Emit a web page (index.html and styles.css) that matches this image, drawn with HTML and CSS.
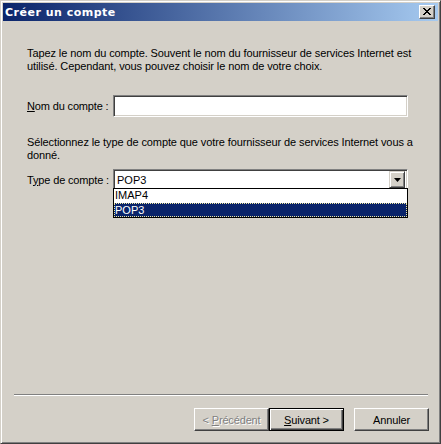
FILE: index.html
```html
<!DOCTYPE html>
<html lang="fr">
<head>
<meta charset="utf-8">
<title>Créer un compte</title>
<link rel="stylesheet" href="styles.css">
</head>
<body>
<div class="window">
  <div class="titlebar">
    <span class="title">Créer un compte</span>
    <button class="close" aria-label="Fermer">
      <svg width="8" height="7" viewBox="0 0 8 7"><path d="M0 0h2v1h1v1h2V1h1V0h2v1H7v1H6v1H5v1h1v1h1v1h1v1H6V6H5V5H3v1H2v1H0V6h1V5h1V4h1V3H2V2H1V1H0z" fill="#000"/></svg>
    </button>
  </div>
  <div class="content">
    <p class="para first">Tapez le nom du compte. Souvent le nom du fournisseur de services Internet est utilisé. Cependant, vous pouvez choisir le nom de votre choix.</p>
    <div class="row name-row">
      <label class="label"><u>N</u>om du compte :</label>
      <div class="edit"></div>
    </div>
    <p class="para second">Sélectionnez le type de compte que votre fournisseur de services Internet vous a donné.</p>
    <div class="row type-row">
      <label class="label">T<u>y</u>pe de compte :</label>
      <div class="combo">
        <span class="combo-value">POP3</span>
        <span class="combo-btn">
          <svg width="7" height="4" viewBox="0 0 7 4"><path d="M0 0h7L3.5 4z" fill="#000"/></svg>
        </span>
        <div class="list">
          <div class="item">IMAP4</div>
          <div class="item selected">POP3</div>
        </div>
      </div>
    </div>
  </div>
  <div class="footer">
    <div class="separator"></div>
    <div class="buttons">
      <button class="btn disabled">&lt; <u>P</u>récédent</button>
      <button class="btn default"><u>S</u>uivant &gt;</button>
      <button class="btn cancel">Annuler</button>
    </div>
  </div>
</div>
</body>
</html>
```

FILE: styles.css
```css
* { box-sizing: border-box; }
html, body { margin: 0; padding: 0; background: #d4d0c8; }
body {
  font-family: "Liberation Sans", Arial, sans-serif;
  font-size: 11px;
  color: #000;
}
.window {
  width: 441px;
  height: 444px;
  background: #d4d0c8;
  border: 1px solid;
  border-color: #d4d0c8 #404040 #404040 #d4d0c8;
  box-shadow: inset 1px 1px 0 #fff, inset -1px -1px 0 #808080;
  padding: 2px;
  display: flex;
  flex-direction: column;
}
.titlebar {
  height: 18px;
  background: linear-gradient(to right, #0a246a, #a6caf0);
  display: flex;
  align-items: center;
  justify-content: space-between;
  padding: 0 3px 0 2px;
}
.title {
  color: #fff;
  font-weight: bold;
  font-size: 11px;
  letter-spacing: 0.5px;
  font-family: "DejaVu Sans", Verdana, sans-serif;
}
.close {
  width: 16px;
  height: 14px;
  padding: 0;
  margin: 0;
  background: #d4d0c8;
  border: 1px solid;
  border-color: #fff #404040 #404040 #fff;
  box-shadow: inset -1px -1px 0 #808080;
  display: flex;
  align-items: center;
  justify-content: center;
}
.close svg { display: block; margin: 0 1px 1px 0; }
.content {
  flex: 1;
  padding: 26px 30px 0 24px;
}
.para {
  margin: 0 -8px 0 0;
  line-height: 13px;
  letter-spacing: -0.1px;
}
.row {
  display: flex;
  align-items: center;
}
.label {
  width: 86px;
  flex: none;
  white-space: nowrap;
  letter-spacing: -0.15px;
}
.name-row { margin-top: 22px; }
.second { margin-top: 19px; }
.type-row { margin-top: 7px; }
.edit {
  flex: 1;
  height: 22px;
  background: #fff;
  border: 1px solid;
  border-color: #808080 #fff #fff #808080;
  box-shadow: inset 1px 1px 0 #404040, inset -1px -1px 0 #d4d0c8;
}
.combo {
  position: relative;
  flex: 1;
  height: 21px;
  background: #fff;
  border: 1px solid;
  border-color: #808080 #fff #fff #808080;
  box-shadow: inset 1px 1px 0 #404040, inset -1px -1px 0 #d4d0c8;
  display: flex;
  align-items: center;
  padding: 2px;
}
.combo-value {
  flex: 1;
  padding-left: 1px;
}
.combo-btn {
  width: 16px;
  height: 17px;
  background: #d4d0c8;
  border: 1px solid;
  border-color: #d4d0c8 #404040 #404040 #d4d0c8;
  box-shadow: inset 1px 1px 0 #fff, inset -1px -1px 0 #808080;
  display: flex;
  align-items: center;
  justify-content: center;
}
.combo-btn svg { display: block; }
.list {
  position: absolute;
  left: -1px;
  right: -1px;
  top: 18px;
  background: #fff;
  border: 1px solid #000;
  padding: 0;
}
.item {
  height: 14px;
  line-height: 13px;
  padding-left: 1px;
}
.item.selected {
  background: #0a246a;
  color: #fff;
  border: 1px dotted #f0e8a0;
  line-height: 12px;
  padding-left: 0;
}
.footer {
  padding: 0 9px 10px 11px;
}
.separator {
  height: 2px;
  border-top: 1px solid #808080;
  border-bottom: 1px solid #fff;
  margin-right: 1px;
}
.buttons {
  display: flex;
  justify-content: flex-end;
  margin-top: 12px;
}
.btn {
  width: 75px;
  height: 23px;
  font-family: "Liberation Sans", Arial, sans-serif;
  font-size: 11px;
  letter-spacing: -0.15px;
  color: #000;
  background: #d4d0c8;
  border: 1px solid;
  border-color: #fff #404040 #404040 #fff;
  box-shadow: inset -1px -1px 0 #808080;
  padding: 0;
  margin: 0;
}
.btn.disabled {
  color: #808080;
  text-shadow: 1px 1px 0 #fff;
}
.btn.default {
  border: 1px solid #000;
  box-shadow: inset 1px 1px 0 #fff, inset -1px -1px 0 #404040, inset -2px -2px 0 #808080;
}
.btn.cancel { margin-left: 10px; }
```
